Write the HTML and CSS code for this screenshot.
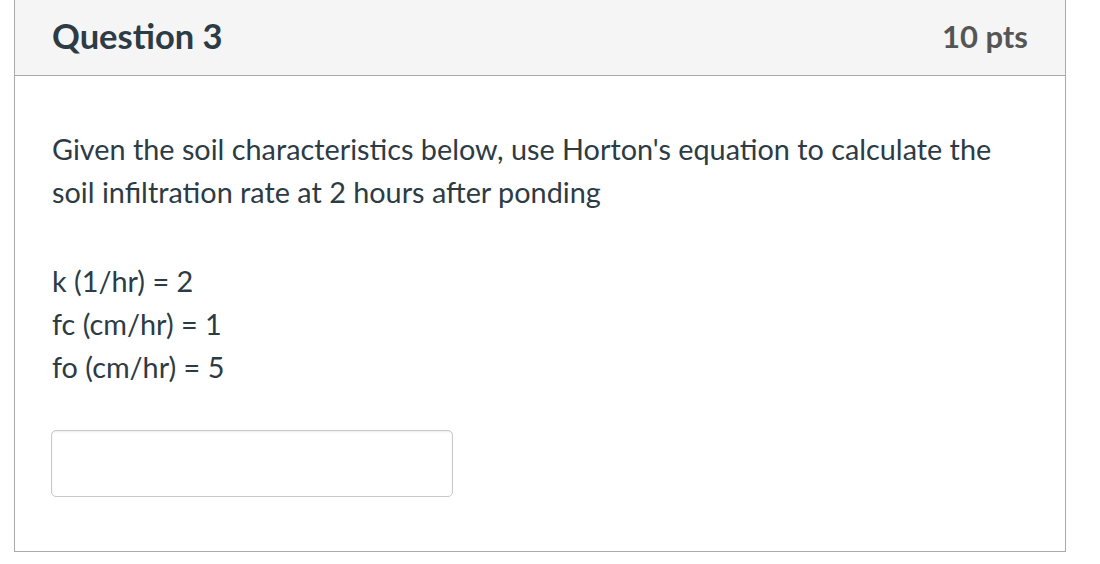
FILE: index.html
```html
<!DOCTYPE html>
<html>
<head>
<meta charset="utf-8">
<link rel="stylesheet" href="styles.css">
</head>
<body>
<div class="question">
  <div class="header">
    <span class="title">Question 3</span>
    <span class="points">10 pts</span>
  </div>
  <div class="content">
    <p class="text">Given the soil characteristics below, use Horton's equation to calculate the soil infiltration rate at 2 hours after ponding</p>
    <p class="text values">k (1/hr) = 2<br>fc (cm/hr) = 1<br>fo (cm/hr) = 5</p>
    <input class="answer" type="text">
  </div>
</div>
</body>
</html>
```
FILE: styles.css
```css
html, body {
  margin: 0;
  padding: 0;
  background: #ffffff;
}
body {
  font-family: Lato, "Noto Sans", sans-serif;
  color: #2d3b45;
}
.question {
  margin-left: 14px;
  width: 1052px;
  box-sizing: border-box;
  border: 1px solid #aaaaaa;
  border-top: none;
  height: 552px;
}
.header {
  height: 76px;
  box-sizing: border-box;
  background: #f5f5f5;
  border-bottom: 1px solid #aaaaaa;
  display: flex;
  align-items: center;
  justify-content: space-between;
  padding: 0 37px 4px;
}
.title {
  font-size: 34.5px;
  font-weight: 700;
  color: #2d3b45;
}
.points {
  font-size: 31px;
  font-weight: 700;
  color: #555555;
}
.content {
  padding: 52px 37px 0;
}
.text {
  margin: 0 0 46px;
  font-size: 28.8px;
  line-height: 43px;
}
.values {
  margin-bottom: 41px;
}
.answer {
  display: block;
  width: 402px;
  height: 67px;
  box-sizing: border-box;
  border: 1px solid #c8c8c8;
  border-radius: 5px;
  box-shadow: inset 0 1px 2px rgba(0,0,0,0.08);
  margin: 0 0 0 -1px;
  padding: 0;
  background: #fff;
}
```
